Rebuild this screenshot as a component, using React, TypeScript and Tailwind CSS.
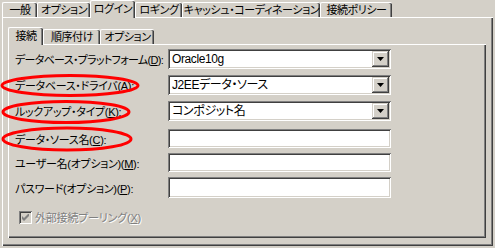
import React from "react";

const font = "[font-family:'Liberation_Sans','Noto_Sans_CJK_JP',sans-serif] [font-feature-settings:'palt'] text-[11px] leading-[13px] text-black";

function Tab({ label, w, selected }: { label: string; w: string; selected?: boolean }) {
  return (
    <div
      className={
        "flex items-start justify-center border-t border-l border-white rounded-t-[2px] bg-[#d4d0c8] shadow-[inset_-1px_0_#404040,inset_-2px_0_#808080] " +
        w +
        (selected ? " h-[18px] -mb-[1px] relative z-10 pt-[2px]" : " h-[15px] pt-[1px]")
      }
    >
      <span className="whitespace-nowrap tracking-[-0.4px]">{label}</span>
    </div>
  );
}

function Mn({ pre, k, post, tr }: { pre: string; k: string; post?: string; tr?: string }) {
  return (
    <span className={"whitespace-nowrap " + (tr ?? "tracking-[-0.3px]")}>
      {pre}(<span className="underline underline-offset-[1px]">{k}</span>){post ?? ":"}
    </span>
  );
}

function Combo({ value }: { value: string }) {
  return (
    <div className="flex h-[20px] w-[223px] bg-white p-[2px] shadow-[inset_1px_1px_#808080,inset_-1px_-1px_#fff,inset_2px_2px_#404040,inset_-2px_-2px_#d4d0c8]">
      <div className="flex-1 flex items-center pl-[2px] whitespace-nowrap text-[12px] tracking-[-0.4px]">{value}</div>
      <div className="w-[17px] h-[16px] bg-[#d4d0c8] flex items-center justify-center shadow-[inset_-1px_-1px_#404040,inset_1px_1px_#d4d0c8,inset_-2px_-2px_#808080,inset_2px_2px_#fff]">
        <svg width="7" height="4" viewBox="0 0 7 4">
          <path d="M0 0h7L3.5 4z" fill="#000" />
        </svg>
      </div>
    </div>
  );
}

function Field({ h }: { h: string }) {
  return (
    <div className={"w-[223px] bg-white shadow-[inset_1px_1px_#808080,inset_-1px_-1px_#fff,inset_2px_2px_#404040,inset_-2px_-2px_#d4d0c8] " + h} />
  );
}

function Row({ label, children, mt }: { label: React.ReactNode; children: React.ReactNode; mt: string }) {
  return (
    <div className={"flex items-center " + mt}>
      <div className="w-[153px] pt-[3px]">{label}</div>
      {children}
    </div>
  );
}

export default function App() {
  return (
    <div className={"relative w-[495px] h-[248px] bg-[#d4d0c8] overflow-hidden " + font}>
      {/* outer tabs */}
      <div className="flex items-end h-[17px] pl-[2px]">
        <Tab label="一般" w="w-[35px]" />
        <Tab label="オプション" w="w-[53px]" />
        <Tab label="ログイン" w="w-[45px]" selected />
        <Tab label="ロギング" w="w-[47px]" />
        <Tab label="キャッシュ・コーディネーション" w="w-[138px]" />
        <Tab label="接続ポリシー" w="w-[72px]" />
      </div>
      {/* outer panel */}
      <div className="ml-[2px] w-[491px] h-[229px] border-t border-l border-white shadow-[inset_-1px_-1px_#404040,inset_-2px_-2px_#808080] pt-[9px] pl-[5px]">
        <div className="flex items-end h-[17px]">
          <Tab label="接続" w="w-[35px]" selected />
          <Tab label="順序付け" w="w-[57px]" />
          <Tab label="オプション" w="w-[54px]" />
        </div>
        <div className="w-[478px] h-[194px] border-t border-l border-white shadow-[inset_-1px_-1px_#404040,inset_-2px_-2px_#808080] pl-[6px] pt-[4px] flex flex-col">
          <Row mt="mt-0" label={<Mn pre="データベース・プラットフォーム" k="D" tr="tracking-[-0.7px]" />}>
            <Combo value="Oracle10g" />
          </Row>
          <Row mt="mt-[6px]" label={<Mn pre="データベース・ドライバ" k="A" />}>
            <Combo value="J2EEデータ・ソース" />
          </Row>
          <Row mt="mt-[6px]" label={<Mn pre="ルックアップ・タイプ" k="K" />}>
            <Combo value="コンポジット名" />
          </Row>
          <Row mt="mt-[8px]" label={<Mn pre="データ・ソース名" k="C" />}>
            <Field h="h-[19px]" />
          </Row>
          <Row mt="mt-[5px]" label={<Mn pre="ユーザー名(オプション)" k="M" />}>
            <Field h="h-[19px]" />
          </Row>
          <Row mt="mt-[5px]" label={<Mn pre="パスワード(オプション)" k="P" />}>
            <Field h="h-[21px]" />
          </Row>
          <div className="flex items-center mt-[11px] pl-[4px]">
            <div className="w-[13px] h-[13px] bg-[#d4d0c8] flex items-center justify-center shadow-[inset_1px_1px_#808080,inset_-1px_-1px_#fff,inset_2px_2px_#404040,inset_-2px_-2px_#d4d0c8]">
              <svg width="7" height="7" viewBox="0 0 7 7">
                <path d="M0 2v3l2 2 5-5V-1L2 4z" fill="#808080" />
              </svg>
            </div>
            <span className="ml-[3px] pt-[3px] text-[#808080] [text-shadow:1px_1px_0_#fff] whitespace-nowrap tracking-[-0.2px]">
              外部接続プーリング(<span className="underline">X</span>)
            </span>
          </div>
        </div>
      </div>
      {/* red annotation ellipses */}
      <svg className="absolute left-0 top-0 pointer-events-none" width="495" height="248">
        <ellipse cx="70" cy="85.5" rx="68" ry="10" fill="none" stroke="#ff0000" strokeWidth="3" />
        <ellipse cx="66" cy="112" rx="63" ry="10.5" fill="none" stroke="#ff0000" strokeWidth="3" />
        <ellipse cx="67" cy="139" rx="64" ry="11" fill="none" stroke="#ff0000" strokeWidth="3" />
      </svg>
    </div>
  );
}
